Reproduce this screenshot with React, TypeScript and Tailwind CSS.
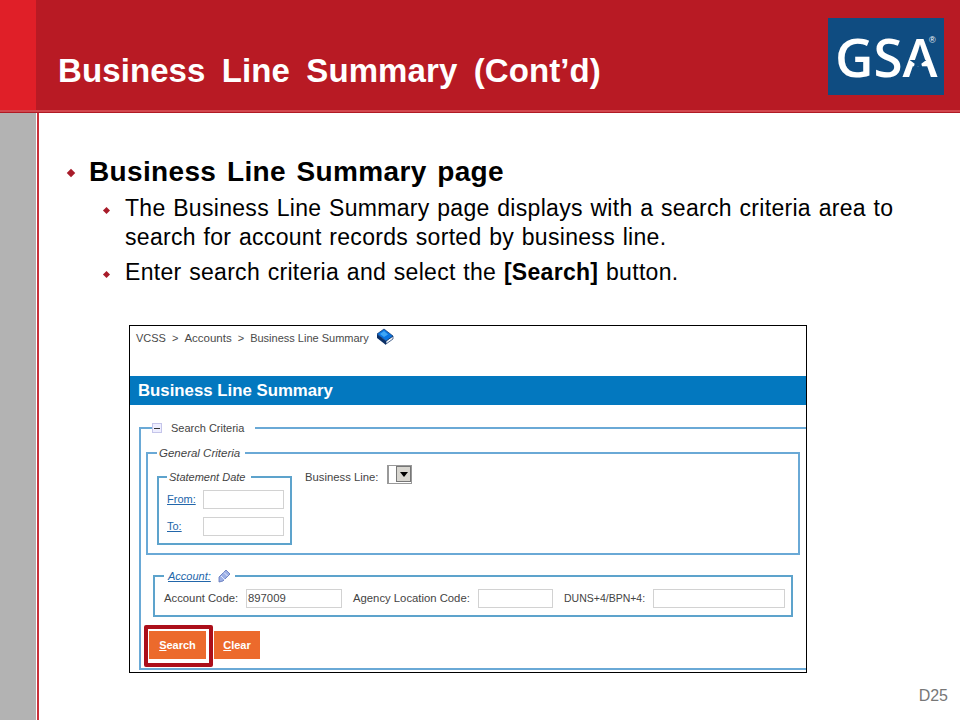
const sans = "font-['Liberation_Sans',Arial,sans-serif]";

function Bullet({ big }: { big?: boolean }) {
  return big ? (
    <span className="mt-[14px] ml-[3px] mr-[15px] h-[6px] w-[6px] shrink-0 rotate-45 bg-[#a81c2a]" />
  ) : (
    <span className="mt-[14px] ml-[3px] mr-[16px] h-[5px] w-[5px] shrink-0 rotate-45 bg-[#a81c2a]" />
  );
}

function Logo() {
  return (
    <div className="relative mt-[18px] flex h-[77px] w-[116px] items-center bg-[#0f4c81] pl-[7px] text-white">
      <span className="font-['Open_Sans',sans-serif] text-[53px] font-semibold leading-none">GSA</span>
      <svg className="absolute left-[80px] top-[35px] h-[19px] w-[20px]" viewBox="0 0 24 22">
        <polygon fill="#0f4c81" points="12,1 14.5,8 22,8 16,12.5 18,20 12,15.5 6,20 8,12.5 2,8 9.5,8" />
      </svg>
      <span className="absolute left-[101px] top-[18px] text-[9px] leading-none">®</span>
    </div>
  );
}

function BookIcon() {
  return (
    <svg className="ml-[7px] -mt-[8px] h-[17px] w-[18px]" viewBox="0 0 18 17">
      <polygon fill="#0b2f66" points="1,6 10,13 10,17 1,10" />
      <polygon fill="#f2f5f8" stroke="#0b2f66" strokeWidth="0.7" points="10,13 17,8 17,11 10,16" />
      <polygon fill="#0a74e0" stroke="#0b2f66" strokeWidth="0.7" points="1,6 8,1 17,8 10,13" />
      <polygon fill="#3fa6f5" points="4,6 8,3 12,6.5 8,9" />
    </svg>
  );
}

function PencilIcon() {
  return (
    <svg className="ml-[6px] h-[14px] w-[14px]" viewBox="0 0 14 14">
      <polygon fill="#9db0e6" stroke="#5a72b8" strokeWidth="0.8" points="2,13 2,8 9,1 13,5 6,12" />
      <line x1="4" y1="7" x2="8" y2="11" stroke="#e6ecfa" strokeWidth="1" />
      <line x1="7" y1="3.5" x2="10.5" y2="7" stroke="#e6ecfa" strokeWidth="1" />
    </svg>
  );
}

function Field({ className }: { className: string }) {
  return <div className={`h-[19px] border border-[#d2d2d2] bg-white ${className}`} />;
}

function Screenshot() {
  return (
    <div className={`ml-[64px] mt-[38px] h-[348px] w-[678px] overflow-hidden border border-black bg-white text-[10px] text-[#444] ${sans}`}>
      <div className="flex h-[19px] items-end pl-[6px] text-[11px] leading-[14px] text-[#4a4a4a]">
        <span>VCSS</span>
        <span className="mx-[6px]">&gt;</span>
        <span className="text-[11.5px]">Accounts</span>
        <span className="mx-[6px]">&gt;</span>
        <span>Business Line Summary</span>
        <BookIcon />
      </div>
      <div className="mt-[31px] flex h-[29px] items-center bg-[#0378bf] pl-[8px] text-[16.8px] font-bold text-white">
        Business Line Summary
      </div>

      <fieldset className="-mr-[20px] ml-[9px] mt-[16px] h-[249px] border-2 border-r-0 border-[#6aa9d6] pl-[5px] pr-[26px]">
        <legend className="ml-[6px] flex h-[14px] items-center pr-[11px] text-[11px]">
          <span className="flex h-[10px] w-[10px] items-center justify-center border border-[#c5c5ea] bg-[#eef]">
            <span className="h-[1px] w-[6px] bg-[#333]" />
          </span>
          <span className="ml-[9px]">Search Criteria</span>
        </legend>

        <fieldset className="mt-[12px] h-[108px] w-[654px] border-2 border-[#6aa9d6] pl-[9px] pt-[1px]">
          <legend className="pl-[2px] pr-[5px] text-[11.5px] italic leading-[12px]">General Criteria</legend>
          <div className="flex items-start">
            <fieldset className="mt-[11px] h-[74px] w-[135px] border-2 border-[#5da3cc] pl-[8px]">
              <legend className="pl-[2px] pr-[6px] text-[11px] italic leading-[12px]">Statement Date</legend>
              <div className="flex items-center pt-[7px]">
                <span className="w-[36px] text-[11px] text-[#2266aa] underline">From:</span>
                <Field className="w-[81px]" />
              </div>
              <div className="mt-[8px] flex items-center">
                <span className="w-[36px] text-[11px] text-[#2266aa] underline">To:</span>
                <Field className="w-[81px]" />
              </div>
            </fieldset>
            <div className="ml-[13px] mt-[5px] flex items-start">
              <span className="mt-[4px] text-[11.3px]">Business Line:</span>
              <span className="ml-[9px] flex h-[19px] w-[25px] items-start justify-end border border-[#999] border-l-2 bg-white">
                <span className="flex h-[16px] w-[15px] items-center justify-center border border-[#777] bg-[#d8d6d0]">
                  <span className="border-x-[4px] border-t-[5px] border-x-transparent border-t-black" />
                </span>
              </span>
            </div>
          </div>
        </fieldset>

        <fieldset className="ml-[7px] mt-[14px] h-[48px] w-[640px] border-2 border-[#5da3cc] pl-[9px]">
          <legend className="flex items-center pl-[4px] pr-[4px] text-[11px] italic leading-[14px] text-[#2266aa]">
            <span className="underline">Account:</span>
            <PencilIcon />
          </legend>
          <div className="flex items-center pt-[6px] text-[11.3px]">
            <span className="w-[82px]">Account Code:</span>
            <div className="h-[19px] w-[96px] border border-[#d2d2d2] pl-[1px] leading-[17px]">897009</div>
            <span className="ml-[11px] w-[125px]">Agency Location Code:</span>
            <Field className="w-[75px]" />
            <span className="ml-[11px] w-[89px] text-[10.5px]">DUNS+4/BPN+4:</span>
            <Field className="w-[132px]" />
          </div>
        </fieldset>

        <div className="relative ml-[3px] mt-[14px] flex gap-[8px] text-[11px] font-bold text-white">
          <span className="flex h-[28px] w-[57px] items-center justify-center bg-[#ec6a2c]">
            <span><u>S</u>earch</span>
          </span>
          <span className="flex h-[28px] w-[46px] items-center justify-center bg-[#ec6a2c]">
            <span><u>C</u>lear</span>
          </span>
          <span className="absolute -left-[5px] -top-[6px] h-[42px] w-[69px] rounded-[2px] border-[4px] border-[#ac0f1a]" />
        </div>
      </fieldset>
    </div>
  );
}

export default function App() {
  return (
    <div className={`flex h-[720px] w-[960px] flex-col overflow-hidden bg-white text-black ${sans}`}>
      <header className="flex h-[113px] shrink-0 flex-col bg-[#b81a24]">
        <div className="flex h-[110px]">
          <div className="w-[36px] bg-[#e01f28]" />
          <div className="flex flex-1 justify-between pr-[16px]">
            <h1 className="ml-[22px] mt-[52px] text-[33px] font-bold leading-[38px] tracking-[0.1px] text-white [word-spacing:7px]">
              Business Line Summary (Cont’d)
            </h1>
            <Logo />
          </div>
        </div>
        <div className="h-[2px] bg-[#d2474e]" />
        <div className="h-[1px] bg-[#b01a24]" />
      </header>

      <div className="flex flex-1">
        <div className="w-[36px] bg-[#b3b3b3]" />
        <div className="ml-[1px] w-[2px] bg-[#c9303a]" />
        <main className="relative flex-1 pl-[26px] pt-[43px]">
          <div className="flex">
            <Bullet big />
            <p className="text-[28px] font-bold leading-[32px] tracking-[0.35px] [word-spacing:2.5px]">Business Line Summary page</p>
          </div>
          <div className="ml-[36px] mt-[6px] flex w-[810px]">
            <Bullet />
            <p className="text-[23px] leading-[29px] tracking-[0.3px] [word-spacing:1px]">
              The Business Line Summary page displays with a search criteria area to search for account records sorted by business line.
            </p>
          </div>
          <div className="ml-[36px] mt-[6px] flex">
            <Bullet />
            <p className="text-[23px] leading-[29px] tracking-[0.3px] [word-spacing:1px]">
              Enter search criteria and select the <b>[Search]</b> button.
            </p>
          </div>
          <Screenshot />
          <span className="absolute bottom-[16px] right-[12px] text-[16px] leading-none text-[#777]">D25</span>
        </main>
      </div>
    </div>
  );
}
